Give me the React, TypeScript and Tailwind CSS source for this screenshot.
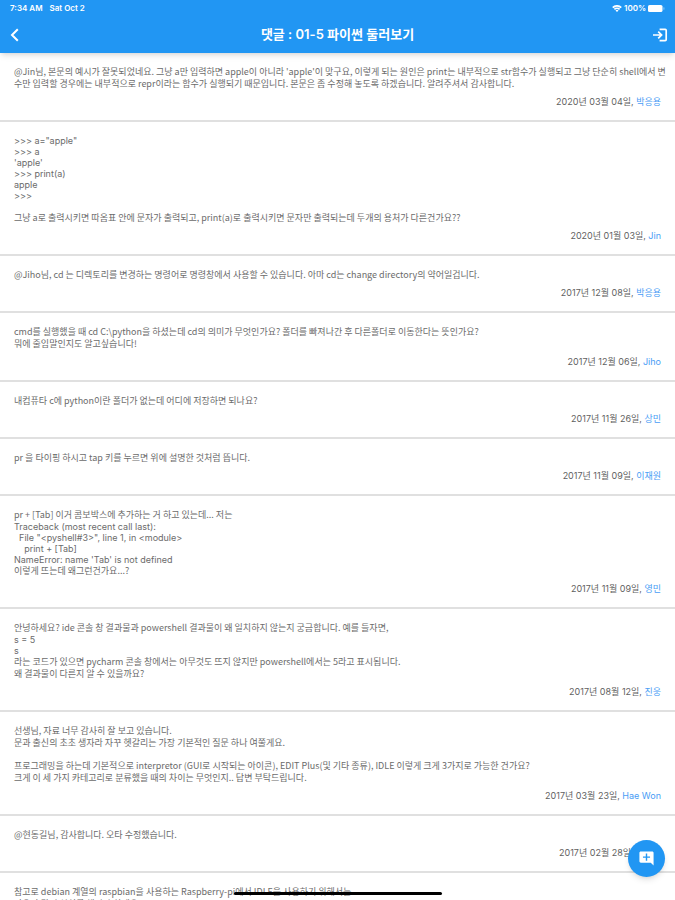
import { MdAddComment } from "react-icons/md";

type Comment = {
    lines: string[];
    date: string;
    author: string;
};

const comments: Comment[] = [
    {
        lines: [
            "@Jin님, 본문의 예시가 잘못되었네요. 그냥 a만 입력하면 apple이 아니라 'apple'이 맞구요, 이렇게 되는 원인은 print는 내부적으로 str함수가 실행되고 그냥 단순히 shell에서 변",
            "수만 입력할 경우에는 내부적으로 repr이라는 함수가 실행되기 때문입니다. 본문은 좀 수정해 놓도록 하겠습니다. 알려주셔서 감사합니다.",
        ],
        date: "2020년 03월 04일",
        author: "박응용",
    },
    {
        lines: [
            ">>> a=\"apple\"",
            ">>> a",
            "'apple'",
            ">>> print(a)",
            "apple",
            ">>>",
            "",
            "그냥 a로 출력시키면 따옴표 안에 문자가 출력되고, print(a)로 출력시키면 문자만 출력되는데 두개의 용처가 다른건가요??",
        ],
        date: "2020년 01월 03일",
        author: "Jin",
    },
    {
        lines: ["@Jiho님, cd 는 디렉토리를 변경하는 명령어로 명령창에서 사용할 수 있습니다. 아마 cd는 change directory의 약어일겁니다."],
        date: "2017년 12월 08일",
        author: "박응용",
    },
    {
        lines: [
            "cmd를 실행했을 때 cd C:\\python을 하셨는데 cd의 의미가 무엇인가요? 폴더를 빠져나간 후 다른폴더로 이동한다는 뜻인가요?",
            "뭐에 줄임말인지도 알고싶습니다!",
        ],
        date: "2017년 12월 06일",
        author: "Jiho",
    },
    {
        lines: ["내컴퓨타 c에 python이란 폴더가 없는데 어디에 저장하면 되나요?"],
        date: "2017년 11월 26일",
        author: "상민",
    },
    {
        lines: ["pr 을 타이핑 하시고 tap 키를 누르면 위에 설명한 것처럼 뜹니다."],
        date: "2017년 11월 09일",
        author: "이재원",
    },
    {
        lines: [
            "pr + [Tab] 이거 콤보박스에 추가하는 거 하고 있는데... 저는",
            "Traceback (most recent call last):",
            "  File \"<pyshell#3>\", line 1, in <module>",
            "    print + [Tab]",
            "NameError: name 'Tab' is not defined",
            "이렇게 뜨는데 왜그런건가요...?",
        ],
        date: "2017년 11월 09일",
        author: "영민",
    },
    {
        lines: [
            "안녕하세요? ide 콘솔 창 결과물과 powershell 결과물이 왜 일치하지 않는지 궁금합니다. 예를 들자면,",
            "s = 5",
            "s",
            "라는 코드가 있으면 pycharm 콘솔 창에서는 아무것도 뜨지 않지만 powershell에서는 5라고 표시됩니다.",
            "왜 결과물이 다른지 알 수 있을까요?",
        ],
        date: "2017년 08월 12일",
        author: "진웅",
    },
    {
        lines: [
            "선생님, 자료 너무 감사히 잘 보고 있습니다.",
            "문과 출신의 초초 생자라 자꾸 헷갈리는 가장 기본적인 질문 하나 여쭐게요.",
            "",
            "프로그래밍을 하는데 기본적으로 interpretor (GUI로 시작되는 아이콘), EDIT Plus(및 기타 종류), IDLE 이렇게 크게 3가지로 가능한 건가요?",
            "크게 이 세 가지 카테고리로 분류했을 때의 차이는 무엇인지.. 답변 부탁드립니다.",
        ],
        date: "2017년 03월 23일",
        author: "Hae Won",
    },
    {
        lines: ["@현동길님, 감사합니다. 오타 수정했습니다."],
        date: "2017년 02월 28일",
        author: "박응용",
    },
    {
        lines: [
            "참고로 debian 계열의 raspbian을 사용하는 Raspberry-pi에서 IDLE을 사용하기 위해서는",
            "다음과 같이 설치를 해줘야 하네요.",
        ],
        date: "2017년 02월 27일",
        author: "현동길",
    },
];

const hasHangul = (line: string) => /[가-힣]/.test(line);

const StatusBar = () => (
    <div className="flex h-4 items-center justify-between px-[10px] text-[8px] font-semibold">
        <div className="flex gap-[7px]">
            <span>7:34 AM</span>
            <span>Sat Oct 2</span>
        </div>
        <div className="flex items-center gap-[2px]">
            <svg className="h-[7px] w-[10px]" viewBox="0 0 20 14" fill="none" stroke="currentColor" strokeWidth="3.4">
                <path d="M1.5 5.2a12 12 0 0 1 17 0" />
                <path d="M4.8 8.6a7.4 7.4 0 0 1 10.4 0" />
                <path d="M10 14 7 10.9a4.3 4.3 0 0 1 6 0z" fill="currentColor" stroke="none" />
            </svg>
            <span>100%</span>
            <svg className="h-[7px] w-[17px]" viewBox="0 0 17 7" fill="currentColor">
                <rect x="0" y="0" width="14.5" height="7" rx="1.6" />
                <rect x="15.4" y="2.2" width="1" height="2.6" rx="0.5" opacity="0.5" />
            </svg>
        </div>
    </div>
);

const CommentItem = ({ comment }: { comment: Comment }) => (
    <li className="border-b-2 border-[#e0e0e0] px-[14px] pt-[13px] pb-3">
        <div className="text-[9px] text-[#6b6b6b]">
            {comment.lines.map((line, idx) => (
                <p
                    key={idx}
                    className={
                        hasHangul(line)
                            ? "h-3 whitespace-pre font-['Noto_Sans_CJK_KR',sans-serif] leading-[12px]"
                            : "h-[11px] whitespace-pre leading-[11px]"
                    }
                >
                    {line}
                </p>
            ))}
        </div>
        <div className="mt-[6px] h-3 text-right text-[9px] leading-[12px] text-[#5f5f5f]">
            {comment.date}, <a href="#" className="text-[#4a9df5]">{comment.author}</a>
        </div>
    </li>
);

export default function App() {
    return (
        <div className="relative flex h-screen flex-col overflow-hidden bg-white font-['Inter','Noto_Sans_CJK_KR',sans-serif]">
            <header className="z-10 shrink-0 bg-[#2196f3] text-white shadow-md">
                <StatusBar />
                <div className="flex h-[37px] items-center justify-between px-[7px]">
                    <button type="button" aria-label="Back">
                        <svg className="size-4" viewBox="0 0 16 16" fill="none" stroke="currentColor" strokeWidth="2">
                            <path d="M10.8 2.2 5 8l5.8 5.8" />
                        </svg>
                    </button>
                    <h1 className="text-[13px] font-semibold">댓글 : 01-5 파이썬 둘러보기</h1>
                    <button type="button" aria-label="Login">
                        <svg className="size-4" viewBox="0 0 16 16" fill="none" stroke="currentColor" strokeWidth="1.7">
                            <path d="M1 8h8.4M6.2 4.6 9.6 8l-3.4 3.4" />
                            <path d="M7.6 2.4h5.6a1 1 0 0 1 1 1v9.2a1 1 0 0 1-1 1H7.6" />
                        </svg>
                    </button>
                </div>
            </header>

            <main className="min-h-0 flex-1 overflow-x-hidden overflow-y-auto">
                <ul>
                    {comments.map((comment, idx) => (
                        <CommentItem key={idx} comment={comment} />
                    ))}
                </ul>
            </main>

            <button
                type="button"
                aria-label="Add comment"
                className="absolute right-[10px] bottom-[23px] flex size-[37px] items-center justify-center rounded-full bg-[#2196f3] text-white shadow-md"
            >
                <MdAddComment className="size-[17px]" />
            </button>

            {/* home indicator */}
            <div className="absolute bottom-[5px] left-1/2 h-[3px] w-[208px] -translate-x-1/2 rounded-full bg-black" />
        </div>
    );
}
